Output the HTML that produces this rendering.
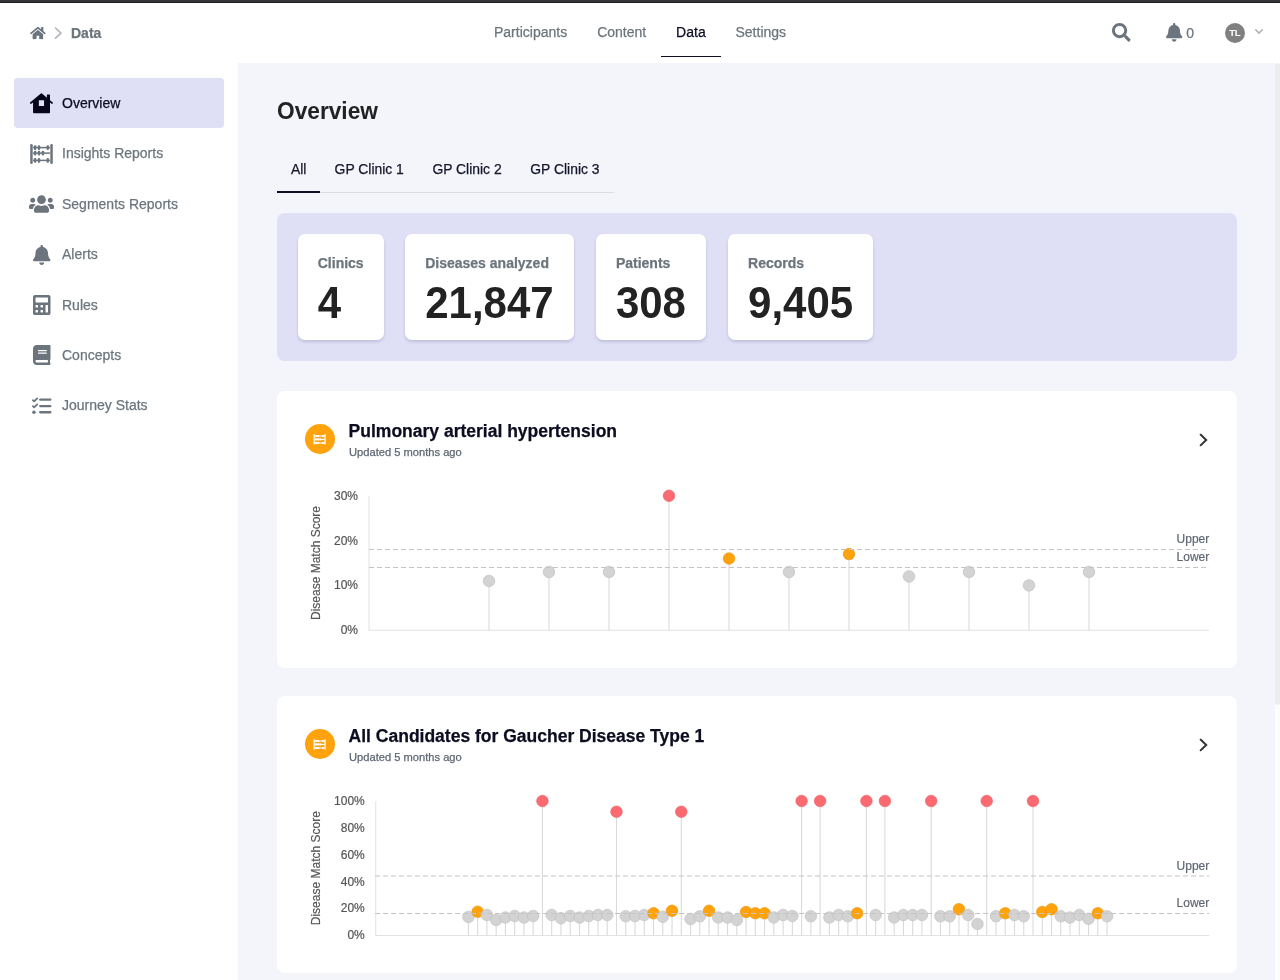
<!DOCTYPE html>
<html lang="en"><head><meta charset="utf-8"><title>Overview</title>
<style>
*{box-sizing:border-box}
html,body{margin:0;padding:0}
body{width:1280px;height:980px;overflow:hidden;position:relative;background:#f4f5fa;font-family:"Liberation Sans",sans-serif;font-size:14px;color:#6c757d;-webkit-text-stroke:0.250px}
#root{position:absolute;left:0;top:0;width:1280px;height:980px;will-change:transform}
.abs{position:absolute}
.ic{position:absolute;display:block;overflow:visible}
.t{position:absolute;white-space:nowrap;line-height:16px;height:16px}
#topbar{left:0;top:0;width:1280px;height:3px;background:linear-gradient(#34353a 0,#34353a 2px,#1c1c1e 2px,#1c1c1e 3px)}
#header{left:0;top:3px;width:1280px;height:60px;background:#fff}
#sidebar{left:0;top:63px;width:238px;height:917px;background:#fff}
.nav{color:#6c757d;font-size:14px}
.side{font-size:14px;color:#6c757d}
.dark{color:#0c0d21}
#active{left:14px;top:78px;width:210px;height:50px;border-radius:4px;background:#dfdff6}
h1{position:absolute;margin:0;-webkit-text-stroke:0;left:277px;top:95.600px;transform:translateY(0.6px) scaleY(1.055);transform-origin:0 21.500px;font-size:22.7px;line-height:28px;font-weight:bold;color:#222}
.tab{color:#15162b;font-size:13.900px}
#panel{left:277px;top:212.800px;width:960px;height:148.100px;border-radius:8px;background:#dfdff6}
.stat{position:absolute;top:234px;height:106px;background:#fff;border-radius:7px;box-shadow:0 2px 3px rgba(40,40,90,.17)}
.stat .l{position:absolute;left:20px;top:21px;font-size:14px;line-height:16px;font-weight:bold;color:#6c757d;white-space:nowrap}
.stat .n{position:absolute;left:20px;top:46.100px;-webkit-text-stroke:0;transform:scale(1,1.058);transform-origin:0 38.560px;font-size:42px;line-height:48px;font-weight:bold;color:#222;white-space:nowrap}
.card{position:absolute;left:277px;width:960px;height:277.500px;background:#fff;border-radius:8px}
.ttl{position:absolute;left:348.600px;font-size:17.5px;line-height:20px;font-weight:bold;color:#0c0d21;white-space:nowrap}
.sub{position:absolute;left:349px;font-size:11.150px;line-height:13px;color:#5f6773;white-space:nowrap}
.dot{position:absolute;left:305px;width:30px;height:30px;border-radius:50%;background:#ffa20c}
svg text{font-family:"Liberation Sans",sans-serif}
.tk{font-size:12px;fill:#555;stroke:#555;stroke-width:.2px}
.ul{font-size:12px;fill:#5f6773;stroke:#5f6773;stroke-width:.2px}
.du{stroke:#c4c4c4;stroke-width:1;stroke-dasharray:5 3}
.dl{stroke:#c4c4c4;stroke-width:1;stroke-dasharray:5 3}
</style></head><body>
<div id="root">
<div id="topbar" class="abs"></div>
<div id="header" class="abs"></div>
<div id="sidebar" class="abs"></div>

<header>
<svg class="ic" style="left:30px;top:25.6px;width:15.75px;height:14px" viewBox="0 0 576 512"><path fill="#6c757d" d="M280.370 148.260L96 300.110V464a16 16 0 0 0 16 16l112.060-.29a16 16 0 0 0 15.920-16V368a16 16 0 0 1 16-16h64a16 16 0 0 1 16 16v95.640a16 16 0 0 0 16 16.050L464 480a16 16 0 0 0 16-16V300L295.670 148.260a12.190 12.190 0 0 0-15.300 0zM571.600 251.470L488 182.560V44.050a12 12 0 0 0-12-12h-56a12 12 0 0 0-12 12v72.610L318.470 43a48 48 0 0 0-61 0L4.340 251.470a12 12 0 0 0-1.600 16.900l25.500 31A12 12 0 0 0 45.150 301l235.220-193.740a12.190 12.190 0 0 1 15.300 0L530.900 301a12 12 0 0 0 16.900-1.600l25.500-31a12 12 0 0 0-1.700-16.930z"/></svg>
<svg class="ic" style="left:54px;top:26px;width:10px;height:14px" viewBox="0 0 10 14"><path d="M1.500 2L7 7.100L1.500 12.200" fill="none" stroke="#b0b3b9" stroke-width="1.600" stroke-linecap="round" stroke-linejoin="round"/></svg>
<div class="t" style="left:71px;top:25px;font-weight:bold;color:#6c757d">Data</div>
<div class="t nav" style="left:494px;top:24px">Participants</div>
<div class="t nav" style="left:597.2px;top:24px">Content</div>
<div class="t nav dark" style="left:676.1px;top:24px">Data</div>
<div class="t nav" style="left:735.5px;top:24px">Settings</div>
<div class="abs" style="left:661px;top:55.700px;width:60px;height:1.600px;background:#0c0d21"></div>
<svg class="ic" style="left:1111.8px;top:23.2px;width:18.67px;height:18.67px" viewBox="0 0 512 512"><path fill="#6c757d" d="M505 442.700L405.300 343c-4.500-4.500-10.600-7-17-7H372c27.600-35.300 44-79.700 44-128C416 93.100 322.900 0 208 0S0 93.100 0 208s93.100 208 208 208c48.300 0 92.700-16.400 128-44v16.300c0 6.400 2.500 12.500 7 17l99.700 99.700c9.400 9.400 24.600 9.400 33.900 0l28.300-28.300c9.400-9.400 9.400-24.600.1-34zM208 336c-70.700 0-128-57.200-128-128 0-70.700 57.200-128 128-128 70.700 0 128 57.200 128 128 0 70.700-57.200 128-128 128z"/></svg>
<svg class="ic" style="left:1165.8px;top:23.2px;width:16.34px;height:18.67px" viewBox="0 0 448 512"><path fill="#6c757d" d="M224 512c35.320 0 63.970-28.650 63.970-64H160.030c0 35.350 28.650 64 63.970 64zm215.390-149.710c-19.320-20.760-55.470-51.990-55.470-154.290 0-77.700-54.480-139.900-127.940-155.160V32c0-17.670-14.320-32-31.980-32s-31.980 14.330-31.980 32v20.840C118.560 68.100 64.080 130.300 64.080 208c0 102.300-36.150 133.530-55.470 154.290-6 6.450-8.660 14.160-8.610 21.710.11 16.400 12.980 32 32.100 32h383.800c19.120 0 32-15.600 32.100-32 .05-7.550-2.610-15.270-8.610-21.710z"/></svg>
<div class="t" style="left:1186.300px;top:25px;color:#6c757d">0</div>
<div class="abs" style="left:1225px;top:23px;width:20px;height:20px;border-radius:50%;background:#808080;color:#fff;font-size:9.600px;font-weight:bold;line-height:19px;text-align:center;letter-spacing:-0.500px;padding-right:0.600px;-webkit-text-stroke:0">TL</div>
<svg class="ic" style="left:1254px;top:28px;width:10px;height:8px" viewBox="0 0 10 8"><path d="M1.700 1.800L5 5.100L8.300 1.800" fill="none" stroke="#b2b4ba" stroke-width="1.600" stroke-linecap="round" stroke-linejoin="round"/></svg>
</header>
<aside><nav>
<div id="active" class="abs"></div>
<div class="t side dark" style="left:62px;top:94.5px">Overview</div>
<div class="t side" style="left:62px;top:145.0px">Insights Reports</div>
<div class="t side" style="left:62px;top:195.5px">Segments Reports</div>
<div class="t side" style="left:62px;top:246.0px">Alerts</div>
<div class="t side" style="left:62px;top:296.5px">Rules</div>
<div class="t side" style="left:62px;top:346.5px">Concepts</div>
<div class="t side" style="left:62px;top:397.0px">Journey Stats</div>
<svg class="ic" style="left:30px;top:92.7px;width:23px;height:20.5px" viewBox="0 0 23 20.5"><path fill="#060618" fill-rule="evenodd" d="M10.900 0.450 Q11.430 -0.050 11.960 0.450 L16.900 4.650 V1.950 a0.550 0.550 0 0 1 .55-.55 h2.000 a0.550 0.550 0 0 1 .55.55 V7.350 L22.800 9.550 Q23.150 9.900 22.800 10.250 L22.200 10.900 Q21.900 11.150 21.550 10.850 L20.000 9.500 V19.400 a0.800 0.800 0 0 1-.8.8 H3.860 a0.800 0.800 0 0 1-.8-.8 V9.500 L1.310 10.850 Q0.960 11.150 0.660 10.900 L0.060 10.250 Q-0.290 9.900 0.060 9.550 Z M8.860 7.350 v5.700 h5.200 v-5.700 Z"/></svg>
<svg class="ic" style="left:30px;top:144px;width:23px;height:20px" viewBox="0 0 23 20"><rect x="0.2" y="0" width="2.5" height="20" rx="1.25" fill="#6c757d"/><rect x="20.3" y="0" width="2.5" height="20" rx="1.25" fill="#6c757d"/><rect x="3" y="2.85" width="17" height="1.5" fill="#6c757d"/><rect x="3.90" y="1.20" width="2.4" height="4.8" rx="1" fill="#6c757d"/><rect x="7.80" y="1.20" width="2.4" height="4.8" rx="1" fill="#6c757d"/><rect x="16.55" y="1.20" width="2.4" height="4.8" rx="1" fill="#6c757d"/><rect x="3" y="8.35" width="17" height="1.5" fill="#6c757d"/><rect x="3.90" y="6.70" width="2.4" height="4.8" rx="1" fill="#6c757d"/><rect x="7.80" y="6.70" width="2.4" height="4.8" rx="1" fill="#6c757d"/><rect x="11.70" y="6.70" width="2.4" height="4.8" rx="1" fill="#6c757d"/><rect x="3" y="15.65" width="17" height="1.5" fill="#6c757d"/><rect x="3.90" y="14.00" width="2.4" height="4.8" rx="1" fill="#6c757d"/><rect x="7.80" y="14.00" width="2.4" height="4.8" rx="1" fill="#6c757d"/><rect x="16.55" y="14.00" width="2.4" height="4.8" rx="1" fill="#6c757d"/></svg>
<svg class="ic" style="left:29px;top:194px;width:25.00px;height:20px" viewBox="0 0 640 512"><path fill="#6c757d" d="M96 224c35.3 0 64-28.7 64-64s-28.7-64-64-64-64 28.7-64 64 28.7 64 64 64zm448 0c35.3 0 64-28.7 64-64s-28.7-64-64-64-64 28.7-64 64 28.7 64 64 64zm32 32h-64c-17.6 0-33.5 7.1-45.1 18.6 40.3 22.1 68.9 62 75.1 109.4h66c17.7 0 32-14.3 32-32v-32c0-35.3-28.7-64-64-64zm-256 0c61.9 0 112-50.1 112-112S381.9 32 320 32 208 82.1 208 144s50.1 112 112 112zm76.800 32h-8.300c-20.800 10-43.900 16-68.500 16s-47.600-6-68.500-16h-8.300C179.600 288 128 339.600 128 403.200V432c0 26.500 21.500 48 48 48h288c26.500 0 48-21.500 48-48v-28.800c0-63.600-51.600-115.200-115.200-115.200zm-223.700-13.400C161.500 263.100 145.600 256 128 256H64c-35.300 0-64 28.700-64 64v32c0 17.700 14.300 32 32 32h65.900c6.300-47.400 34.900-87.300 75.200-109.400z"/></svg>
<svg class="ic" style="left:32.75px;top:245px;width:17.50px;height:20px" viewBox="0 0 448 512"><path fill="#6c757d" d="M224 512c35.320 0 63.970-28.650 63.970-64H160.030c0 35.350 28.650 64 63.970 64zm215.390-149.710c-19.320-20.760-55.470-51.990-55.470-154.290 0-77.700-54.480-139.900-127.940-155.160V32c0-17.670-14.320-32-31.980-32s-31.980 14.330-31.980 32v20.840C118.560 68.100 64.080 130.300 64.080 208c0 102.300-36.150 133.530-55.470 154.290-6 6.450-8.660 14.160-8.610 21.710.11 16.400 12.980 32 32.100 32h383.800c19.120 0 32-15.600 32.100-32 .05-7.550-2.610-15.270-8.610-21.710z"/></svg>
<svg class="ic" style="left:32.75px;top:295px;width:17.50px;height:20px" viewBox="0 0 448 512"><path fill="#6c757d" d="M400 0H48C22.400 0 0 22.400 0 48v416c0 25.600 22.400 48 48 48h352c25.600 0 48-22.400 48-48V48c0-25.600-22.400-48-48-48zM128 435.200c0 6.400-6.400 12.800-12.800 12.800H76.800c-6.400 0-12.800-6.400-12.800-12.800v-38.400c0-6.400 6.400-12.800 12.800-12.800h38.400c6.400 0 12.800 6.400 12.800 12.800v38.400zm0-128c0 6.400-6.400 12.800-12.800 12.800H76.800c-6.400 0-12.800-6.400-12.800-12.800v-38.400c0-6.400 6.400-12.800 12.800-12.800h38.400c6.400 0 12.800 6.400 12.800 12.800v38.400zm128 128c0 6.400-6.400 12.800-12.800 12.800h-38.400c-6.400 0-12.800-6.400-12.800-12.800v-38.400c0-6.400 6.400-12.800 12.800-12.800h38.400c6.400 0 12.800 6.400 12.800 12.800v38.400zm0-128c0 6.400-6.400 12.800-12.800 12.800h-38.400c-6.400 0-12.800-6.400-12.800-12.800v-38.400c0-6.400 6.400-12.800 12.800-12.800h38.400c6.400 0 12.800 6.400 12.800 12.800v38.400zm128 128c0 6.400-6.400 12.800-12.800 12.800h-38.400c-6.400 0-12.800-6.400-12.800-12.800V268.800c0-6.400 6.400-12.800 12.800-12.800h38.400c6.400 0 12.800 6.400 12.800 12.800v166.400zm0-256c0 6.400-6.400 12.800-12.800 12.800H76.800c-6.400 0-12.800-6.400-12.800-12.800V76.800C64 70.400 70.400 64 76.800 64h294.400c6.400 0 12.800 6.400 12.800 12.800v102.400z"/></svg>
<svg class="ic" style="left:32.75px;top:345px;width:17.50px;height:20px" viewBox="0 0 448 512"><path fill="#6c757d" d="M448 360V24c0-13.300-10.700-24-24-24H96C43 0 0 43 0 96v320c0 53 43 96 96 96h328c13.300 0 24-10.700 24-24v-16c0-7.500-3.500-14.300-8.900-18.700-4.200-15.400-4.200-59.300 0-74.700 5.400-4.300 8.900-11.100 8.900-18.600zM128 134c0-3.300 2.700-6 6-6h212c3.300 0 6 2.700 6 6v20c0 3.300-2.700 6-6 6H134c-3.300 0-6-2.700-6-6v-20zm0 64c0-3.300 2.700-6 6-6h212c3.300 0 6 2.700 6 6v20c0 3.300-2.700 6-6 6H134c-3.300 0-6-2.700-6-6v-20zm253.400 250H96c-17.700 0-32-14.300-32-32 0-17.600 14.400-32 32-32h285.400c-1.900 17.100-1.900 46.900 0 64z"/></svg>
<svg class="ic" style="left:31.5px;top:395.5px;width:20px;height:20px" viewBox="0 0 20 20"><g stroke="#6c757d" fill="none" stroke-width="2.300" stroke-linecap="round"><path d="M8.200 3.650H18.350M8.200 10.050H18.350M8.200 16.250H18.350"/></g><g stroke="#6c757d" fill="none" stroke-width="1.800" stroke-linecap="round" stroke-linejoin="round"><path d="M0.900 4.100L2.150 5.400L5.200 2.400M0.900 10.100L2.150 11.400L5.200 8.400"/></g><circle cx="1.950" cy="16.250" r="1.750" fill="#6c757d"/></svg>
</nav></aside>
<main>
<h1>Overview</h1>
<div class="t tab" style="left:291px;top:161px">All</div>
<div class="t tab" style="left:334.6px;top:161px">GP Clinic 1</div>
<div class="t tab" style="left:432.4px;top:161px">GP Clinic 2</div>
<div class="t tab" style="left:530.3px;top:161px">GP Clinic 3</div>
<div class="abs" style="left:277px;top:192px;width:337px;height:1px;background:#dcdce0"></div>
<div class="abs" style="left:277px;top:190.500px;width:43px;height:2.500px;background:#0c0d21"></div>
<div id="panel" class="abs"></div>
<div class="stat" style="left:297.75px;width:85.8px"><div class="l">Clinics</div><div class="n">4</div></div>
<div class="stat" style="left:405.2px;width:168.8px"><div class="l">Diseases analyzed</div><div class="n">21,847</div></div>
<div class="stat" style="left:595.9px;width:110.4px"><div class="l">Patients</div><div class="n">308</div></div>
<div class="stat" style="left:728.1px;width:145px"><div class="l">Records</div><div class="n">9,405</div></div>
<div class="card" style="top:390.8px"></div>
<div class="dot" style="top:424px"></div>
<svg class="ic" style="left:313px;top:434.2px;width:13.2px;height:10.8px" viewBox="0 0 23 20"><rect x="0.2" y="0" width="2.5" height="20" rx="1.25" fill="#fff"/><rect x="20.3" y="0" width="2.5" height="20" rx="1.25" fill="#fff"/><rect x="3" y="2.70" width="17" height="2.0" fill="#fff"/><rect x="3.40" y="1.70" width="3.4" height="4.0" rx="1" fill="#fff"/><rect x="7.30" y="1.70" width="3.4" height="4.0" rx="1" fill="#fff"/><rect x="16.05" y="1.70" width="3.4" height="4.0" rx="1" fill="#fff"/><rect x="3" y="9.00" width="17" height="2.0" fill="#fff"/><rect x="3.40" y="8.00" width="3.4" height="4.0" rx="1" fill="#fff"/><rect x="7.30" y="8.00" width="3.4" height="4.0" rx="1" fill="#fff"/><rect x="11.20" y="8.00" width="3.4" height="4.0" rx="1" fill="#fff"/><rect x="3" y="15.60" width="17" height="2.0" fill="#fff"/><rect x="3.40" y="14.60" width="3.4" height="4.0" rx="1" fill="#fff"/><rect x="7.30" y="14.60" width="3.4" height="4.0" rx="1" fill="#fff"/><rect x="16.05" y="14.60" width="3.4" height="4.0" rx="1" fill="#fff"/></svg>
<div class="ttl" style="top:420.5px">Pulmonary arterial hypertension</div>
<div class="sub" style="top:445.5px">Updated 5 months ago</div>
<svg class="ic" style="left:1197px;top:432px;width:14px;height:16px" viewBox="0 0 14 16"><path d="M3.800 2.800L9.200 8L3.800 13.200" fill="none" stroke="#333" stroke-width="2" stroke-linecap="square" stroke-linejoin="miter"/></svg>
<div class="card" style="top:695.8px"></div>
<div class="dot" style="top:729px"></div>
<svg class="ic" style="left:313px;top:739.2px;width:13.2px;height:10.8px" viewBox="0 0 23 20"><rect x="0.2" y="0" width="2.5" height="20" rx="1.25" fill="#fff"/><rect x="20.3" y="0" width="2.5" height="20" rx="1.25" fill="#fff"/><rect x="3" y="2.70" width="17" height="2.0" fill="#fff"/><rect x="3.40" y="1.70" width="3.4" height="4.0" rx="1" fill="#fff"/><rect x="7.30" y="1.70" width="3.4" height="4.0" rx="1" fill="#fff"/><rect x="16.05" y="1.70" width="3.4" height="4.0" rx="1" fill="#fff"/><rect x="3" y="9.00" width="17" height="2.0" fill="#fff"/><rect x="3.40" y="8.00" width="3.4" height="4.0" rx="1" fill="#fff"/><rect x="7.30" y="8.00" width="3.4" height="4.0" rx="1" fill="#fff"/><rect x="11.20" y="8.00" width="3.4" height="4.0" rx="1" fill="#fff"/><rect x="3" y="15.60" width="17" height="2.0" fill="#fff"/><rect x="3.40" y="14.60" width="3.4" height="4.0" rx="1" fill="#fff"/><rect x="7.30" y="14.60" width="3.4" height="4.0" rx="1" fill="#fff"/><rect x="16.05" y="14.60" width="3.4" height="4.0" rx="1" fill="#fff"/></svg>
<div class="ttl" style="top:725.5px">All Candidates for Gaucher Disease Type 1</div>
<div class="sub" style="top:750.5px">Updated 5 months ago</div>
<svg class="ic" style="left:1197px;top:737px;width:14px;height:16px" viewBox="0 0 14 16"><path d="M3.800 2.800L9.200 8L3.800 13.200" fill="none" stroke="#333" stroke-width="2" stroke-linecap="square" stroke-linejoin="miter"/></svg>
<svg class="ic" style="left:0;top:0;width:1280px;height:980px" viewBox="0 0 1280 980"><text x="358" y="500.05" text-anchor="end" class="tk">30%</text><text x="358" y="544.50" text-anchor="end" class="tk">20%</text><text x="358" y="589.10" text-anchor="end" class="tk">10%</text><text x="358" y="633.70" text-anchor="end" class="tk">0%</text><text transform="translate(320,563.0) rotate(-90)" text-anchor="middle" class="tk">Disease Match Score</text><path d="M369 495.75V630.25H1209.25" fill="none" stroke="#e2e2e2" stroke-width="1"/><line x1="489.00" y1="580.93" x2="489.00" y2="630.25" stroke="#dadada" stroke-width="1.100"/><line x1="549.00" y1="571.97" x2="549.00" y2="630.25" stroke="#dadada" stroke-width="1.100"/><line x1="609.00" y1="571.97" x2="609.00" y2="630.25" stroke="#dadada" stroke-width="1.100"/><line x1="669.00" y1="495.75" x2="669.00" y2="630.25" stroke="#dadada" stroke-width="1.100"/><line x1="729.00" y1="558.52" x2="729.00" y2="630.25" stroke="#dadada" stroke-width="1.100"/><line x1="789.00" y1="571.97" x2="789.00" y2="630.25" stroke="#dadada" stroke-width="1.100"/><line x1="849.00" y1="554.03" x2="849.00" y2="630.25" stroke="#dadada" stroke-width="1.100"/><line x1="909.00" y1="576.45" x2="909.00" y2="630.25" stroke="#dadada" stroke-width="1.100"/><line x1="969.00" y1="571.97" x2="969.00" y2="630.25" stroke="#dadada" stroke-width="1.100"/><line x1="1029.00" y1="585.42" x2="1029.00" y2="630.25" stroke="#dadada" stroke-width="1.100"/><line x1="1089.00" y1="571.97" x2="1089.00" y2="630.25" stroke="#dadada" stroke-width="1.100"/><circle cx="489.00" cy="580.93" r="5.800" fill="#d3d3d3" stroke="#bcbcbc" stroke-width="0.600"/><circle cx="549.00" cy="571.97" r="5.800" fill="#d3d3d3" stroke="#bcbcbc" stroke-width="0.600"/><circle cx="609.00" cy="571.97" r="5.800" fill="#d3d3d3" stroke="#bcbcbc" stroke-width="0.600"/><circle cx="669.00" cy="495.75" r="5.800" fill="#fb6a70" stroke="#ea5a61" stroke-width="0.600"/><circle cx="729.00" cy="558.52" r="5.800" fill="#ffa20c" stroke="#e39208" stroke-width="0.600"/><circle cx="789.00" cy="571.97" r="5.800" fill="#d3d3d3" stroke="#bcbcbc" stroke-width="0.600"/><circle cx="849.00" cy="554.03" r="5.800" fill="#ffa20c" stroke="#e39208" stroke-width="0.600"/><circle cx="909.00" cy="576.45" r="5.800" fill="#d3d3d3" stroke="#bcbcbc" stroke-width="0.600"/><circle cx="969.00" cy="571.97" r="5.800" fill="#d3d3d3" stroke="#bcbcbc" stroke-width="0.600"/><circle cx="1029.00" cy="585.42" r="5.800" fill="#d3d3d3" stroke="#bcbcbc" stroke-width="0.600"/><circle cx="1089.00" cy="571.97" r="5.800" fill="#d3d3d3" stroke="#bcbcbc" stroke-width="0.600"/><line x1="369" y1="549.5" x2="1209.25" y2="549.5" class="du"/><line x1="369" y1="567.5" x2="1209.25" y2="567.5" class="dl"/><text x="1209.25" y="542.5" text-anchor="end" class="ul">Upper</text><text x="1209.25" y="560.5" text-anchor="end" class="ul">Lower</text><text x="364.75" y="805.20" text-anchor="end" class="tk">100%</text><text x="364.75" y="832.00" text-anchor="end" class="tk">80%</text><text x="364.75" y="858.80" text-anchor="end" class="tk">60%</text><text x="364.75" y="885.60" text-anchor="end" class="tk">40%</text><text x="364.75" y="912.40" text-anchor="end" class="tk">20%</text><text x="364.75" y="939.20" text-anchor="end" class="tk">0%</text><text transform="translate(320,868.2) rotate(-90)" text-anchor="middle" class="tk">Disease Match Score</text><path d="M375.75 801V935.5H1209.25" fill="none" stroke="#e2e2e2" stroke-width="1"/><line x1="468.41" y1="917.00" x2="468.41" y2="935.5" stroke="#dadada" stroke-width="1.100"/><line x1="477.66" y1="911.75" x2="477.66" y2="935.5" stroke="#dadada" stroke-width="1.100"/><line x1="486.92" y1="915.00" x2="486.92" y2="935.5" stroke="#dadada" stroke-width="1.100"/><line x1="496.17" y1="920.00" x2="496.17" y2="935.5" stroke="#dadada" stroke-width="1.100"/><line x1="505.43" y1="917.50" x2="505.43" y2="935.5" stroke="#dadada" stroke-width="1.100"/><line x1="514.68" y1="916.00" x2="514.68" y2="935.5" stroke="#dadada" stroke-width="1.100"/><line x1="523.94" y1="917.50" x2="523.94" y2="935.5" stroke="#dadada" stroke-width="1.100"/><line x1="533.20" y1="916.00" x2="533.20" y2="935.5" stroke="#dadada" stroke-width="1.100"/><line x1="542.45" y1="801.00" x2="542.45" y2="935.5" stroke="#dadada" stroke-width="1.100"/><line x1="551.71" y1="915.00" x2="551.71" y2="935.5" stroke="#dadada" stroke-width="1.100"/><line x1="560.96" y1="918.25" x2="560.96" y2="935.5" stroke="#dadada" stroke-width="1.100"/><line x1="570.22" y1="916.00" x2="570.22" y2="935.5" stroke="#dadada" stroke-width="1.100"/><line x1="579.47" y1="917.50" x2="579.47" y2="935.5" stroke="#dadada" stroke-width="1.100"/><line x1="588.73" y1="916.00" x2="588.73" y2="935.5" stroke="#dadada" stroke-width="1.100"/><line x1="597.98" y1="915.00" x2="597.98" y2="935.5" stroke="#dadada" stroke-width="1.100"/><line x1="607.24" y1="915.00" x2="607.24" y2="935.5" stroke="#dadada" stroke-width="1.100"/><line x1="616.50" y1="811.75" x2="616.50" y2="935.5" stroke="#dadada" stroke-width="1.100"/><line x1="625.75" y1="916.25" x2="625.75" y2="935.5" stroke="#dadada" stroke-width="1.100"/><line x1="635.01" y1="916.00" x2="635.01" y2="935.5" stroke="#dadada" stroke-width="1.100"/><line x1="644.26" y1="915.00" x2="644.26" y2="935.5" stroke="#dadada" stroke-width="1.100"/><line x1="653.52" y1="913.25" x2="653.52" y2="935.5" stroke="#dadada" stroke-width="1.100"/><line x1="662.77" y1="916.75" x2="662.77" y2="935.5" stroke="#dadada" stroke-width="1.100"/><line x1="672.03" y1="910.75" x2="672.03" y2="935.5" stroke="#dadada" stroke-width="1.100"/><line x1="681.28" y1="811.75" x2="681.28" y2="935.5" stroke="#dadada" stroke-width="1.100"/><line x1="690.54" y1="919.00" x2="690.54" y2="935.5" stroke="#dadada" stroke-width="1.100"/><line x1="699.80" y1="916.25" x2="699.80" y2="935.5" stroke="#dadada" stroke-width="1.100"/><line x1="709.05" y1="910.75" x2="709.05" y2="935.5" stroke="#dadada" stroke-width="1.100"/><line x1="718.31" y1="917.50" x2="718.31" y2="935.5" stroke="#dadada" stroke-width="1.100"/><line x1="727.56" y1="917.50" x2="727.56" y2="935.5" stroke="#dadada" stroke-width="1.100"/><line x1="736.82" y1="920.00" x2="736.82" y2="935.5" stroke="#dadada" stroke-width="1.100"/><line x1="746.07" y1="912.00" x2="746.07" y2="935.5" stroke="#dadada" stroke-width="1.100"/><line x1="755.33" y1="913.25" x2="755.33" y2="935.5" stroke="#dadada" stroke-width="1.100"/><line x1="764.59" y1="913.25" x2="764.59" y2="935.5" stroke="#dadada" stroke-width="1.100"/><line x1="773.84" y1="917.50" x2="773.84" y2="935.5" stroke="#dadada" stroke-width="1.100"/><line x1="783.10" y1="915.00" x2="783.10" y2="935.5" stroke="#dadada" stroke-width="1.100"/><line x1="792.35" y1="916.00" x2="792.35" y2="935.5" stroke="#dadada" stroke-width="1.100"/><line x1="801.61" y1="801.00" x2="801.61" y2="935.5" stroke="#dadada" stroke-width="1.100"/><line x1="810.86" y1="916.25" x2="810.86" y2="935.5" stroke="#dadada" stroke-width="1.100"/><line x1="820.12" y1="801.00" x2="820.12" y2="935.5" stroke="#dadada" stroke-width="1.100"/><line x1="829.37" y1="917.50" x2="829.37" y2="935.5" stroke="#dadada" stroke-width="1.100"/><line x1="838.63" y1="915.00" x2="838.63" y2="935.5" stroke="#dadada" stroke-width="1.100"/><line x1="847.89" y1="916.25" x2="847.89" y2="935.5" stroke="#dadada" stroke-width="1.100"/><line x1="857.14" y1="913.25" x2="857.14" y2="935.5" stroke="#dadada" stroke-width="1.100"/><line x1="866.40" y1="801.00" x2="866.40" y2="935.5" stroke="#dadada" stroke-width="1.100"/><line x1="875.65" y1="915.00" x2="875.65" y2="935.5" stroke="#dadada" stroke-width="1.100"/><line x1="884.91" y1="801.00" x2="884.91" y2="935.5" stroke="#dadada" stroke-width="1.100"/><line x1="894.16" y1="917.50" x2="894.16" y2="935.5" stroke="#dadada" stroke-width="1.100"/><line x1="903.42" y1="915.00" x2="903.42" y2="935.5" stroke="#dadada" stroke-width="1.100"/><line x1="912.67" y1="915.00" x2="912.67" y2="935.5" stroke="#dadada" stroke-width="1.100"/><line x1="921.93" y1="915.00" x2="921.93" y2="935.5" stroke="#dadada" stroke-width="1.100"/><line x1="931.19" y1="801.00" x2="931.19" y2="935.5" stroke="#dadada" stroke-width="1.100"/><line x1="940.44" y1="916.25" x2="940.44" y2="935.5" stroke="#dadada" stroke-width="1.100"/><line x1="949.70" y1="916.25" x2="949.70" y2="935.5" stroke="#dadada" stroke-width="1.100"/><line x1="958.95" y1="909.25" x2="958.95" y2="935.5" stroke="#dadada" stroke-width="1.100"/><line x1="968.21" y1="915.00" x2="968.21" y2="935.5" stroke="#dadada" stroke-width="1.100"/><line x1="977.46" y1="924.00" x2="977.46" y2="935.5" stroke="#dadada" stroke-width="1.100"/><line x1="986.72" y1="801.00" x2="986.72" y2="935.5" stroke="#dadada" stroke-width="1.100"/><line x1="995.98" y1="916.25" x2="995.98" y2="935.5" stroke="#dadada" stroke-width="1.100"/><line x1="1005.23" y1="913.25" x2="1005.23" y2="935.5" stroke="#dadada" stroke-width="1.100"/><line x1="1014.49" y1="915.00" x2="1014.49" y2="935.5" stroke="#dadada" stroke-width="1.100"/><line x1="1023.74" y1="916.25" x2="1023.74" y2="935.5" stroke="#dadada" stroke-width="1.100"/><line x1="1033.00" y1="801.00" x2="1033.00" y2="935.5" stroke="#dadada" stroke-width="1.100"/><line x1="1042.25" y1="912.00" x2="1042.25" y2="935.5" stroke="#dadada" stroke-width="1.100"/><line x1="1051.51" y1="909.25" x2="1051.51" y2="935.5" stroke="#dadada" stroke-width="1.100"/><line x1="1060.76" y1="916.25" x2="1060.76" y2="935.5" stroke="#dadada" stroke-width="1.100"/><line x1="1070.02" y1="917.50" x2="1070.02" y2="935.5" stroke="#dadada" stroke-width="1.100"/><line x1="1079.28" y1="915.00" x2="1079.28" y2="935.5" stroke="#dadada" stroke-width="1.100"/><line x1="1088.53" y1="918.75" x2="1088.53" y2="935.5" stroke="#dadada" stroke-width="1.100"/><line x1="1097.79" y1="913.25" x2="1097.79" y2="935.5" stroke="#dadada" stroke-width="1.100"/><line x1="1107.04" y1="916.25" x2="1107.04" y2="935.5" stroke="#dadada" stroke-width="1.100"/><circle cx="468.41" cy="917.00" r="5.800" fill="#d3d3d3" stroke="#bcbcbc" stroke-width="0.600"/><circle cx="477.66" cy="911.75" r="5.800" fill="#ffa20c" stroke="#e39208" stroke-width="0.600"/><circle cx="486.92" cy="915.00" r="5.800" fill="#d3d3d3" stroke="#bcbcbc" stroke-width="0.600"/><circle cx="496.17" cy="920.00" r="5.800" fill="#d3d3d3" stroke="#bcbcbc" stroke-width="0.600"/><circle cx="505.43" cy="917.50" r="5.800" fill="#d3d3d3" stroke="#bcbcbc" stroke-width="0.600"/><circle cx="514.68" cy="916.00" r="5.800" fill="#d3d3d3" stroke="#bcbcbc" stroke-width="0.600"/><circle cx="523.94" cy="917.50" r="5.800" fill="#d3d3d3" stroke="#bcbcbc" stroke-width="0.600"/><circle cx="533.20" cy="916.00" r="5.800" fill="#d3d3d3" stroke="#bcbcbc" stroke-width="0.600"/><circle cx="542.45" cy="801.00" r="5.800" fill="#fb6a70" stroke="#ea5a61" stroke-width="0.600"/><circle cx="551.71" cy="915.00" r="5.800" fill="#d3d3d3" stroke="#bcbcbc" stroke-width="0.600"/><circle cx="560.96" cy="918.25" r="5.800" fill="#d3d3d3" stroke="#bcbcbc" stroke-width="0.600"/><circle cx="570.22" cy="916.00" r="5.800" fill="#d3d3d3" stroke="#bcbcbc" stroke-width="0.600"/><circle cx="579.47" cy="917.50" r="5.800" fill="#d3d3d3" stroke="#bcbcbc" stroke-width="0.600"/><circle cx="588.73" cy="916.00" r="5.800" fill="#d3d3d3" stroke="#bcbcbc" stroke-width="0.600"/><circle cx="597.98" cy="915.00" r="5.800" fill="#d3d3d3" stroke="#bcbcbc" stroke-width="0.600"/><circle cx="607.24" cy="915.00" r="5.800" fill="#d3d3d3" stroke="#bcbcbc" stroke-width="0.600"/><circle cx="616.50" cy="811.75" r="5.800" fill="#fb6a70" stroke="#ea5a61" stroke-width="0.600"/><circle cx="625.75" cy="916.25" r="5.800" fill="#d3d3d3" stroke="#bcbcbc" stroke-width="0.600"/><circle cx="635.01" cy="916.00" r="5.800" fill="#d3d3d3" stroke="#bcbcbc" stroke-width="0.600"/><circle cx="644.26" cy="915.00" r="5.800" fill="#d3d3d3" stroke="#bcbcbc" stroke-width="0.600"/><circle cx="653.52" cy="913.25" r="5.800" fill="#ffa20c" stroke="#e39208" stroke-width="0.600"/><circle cx="662.77" cy="916.75" r="5.800" fill="#d3d3d3" stroke="#bcbcbc" stroke-width="0.600"/><circle cx="672.03" cy="910.75" r="5.800" fill="#ffa20c" stroke="#e39208" stroke-width="0.600"/><circle cx="681.28" cy="811.75" r="5.800" fill="#fb6a70" stroke="#ea5a61" stroke-width="0.600"/><circle cx="690.54" cy="919.00" r="5.800" fill="#d3d3d3" stroke="#bcbcbc" stroke-width="0.600"/><circle cx="699.80" cy="916.25" r="5.800" fill="#d3d3d3" stroke="#bcbcbc" stroke-width="0.600"/><circle cx="709.05" cy="910.75" r="5.800" fill="#ffa20c" stroke="#e39208" stroke-width="0.600"/><circle cx="718.31" cy="917.50" r="5.800" fill="#d3d3d3" stroke="#bcbcbc" stroke-width="0.600"/><circle cx="727.56" cy="917.50" r="5.800" fill="#d3d3d3" stroke="#bcbcbc" stroke-width="0.600"/><circle cx="736.82" cy="920.00" r="5.800" fill="#d3d3d3" stroke="#bcbcbc" stroke-width="0.600"/><circle cx="746.07" cy="912.00" r="5.800" fill="#ffa20c" stroke="#e39208" stroke-width="0.600"/><circle cx="755.33" cy="913.25" r="5.800" fill="#ffa20c" stroke="#e39208" stroke-width="0.600"/><circle cx="764.59" cy="913.25" r="5.800" fill="#ffa20c" stroke="#e39208" stroke-width="0.600"/><circle cx="773.84" cy="917.50" r="5.800" fill="#d3d3d3" stroke="#bcbcbc" stroke-width="0.600"/><circle cx="783.10" cy="915.00" r="5.800" fill="#d3d3d3" stroke="#bcbcbc" stroke-width="0.600"/><circle cx="792.35" cy="916.00" r="5.800" fill="#d3d3d3" stroke="#bcbcbc" stroke-width="0.600"/><circle cx="801.61" cy="801.00" r="5.800" fill="#fb6a70" stroke="#ea5a61" stroke-width="0.600"/><circle cx="810.86" cy="916.25" r="5.800" fill="#d3d3d3" stroke="#bcbcbc" stroke-width="0.600"/><circle cx="820.12" cy="801.00" r="5.800" fill="#fb6a70" stroke="#ea5a61" stroke-width="0.600"/><circle cx="829.37" cy="917.50" r="5.800" fill="#d3d3d3" stroke="#bcbcbc" stroke-width="0.600"/><circle cx="838.63" cy="915.00" r="5.800" fill="#d3d3d3" stroke="#bcbcbc" stroke-width="0.600"/><circle cx="847.89" cy="916.25" r="5.800" fill="#d3d3d3" stroke="#bcbcbc" stroke-width="0.600"/><circle cx="857.14" cy="913.25" r="5.800" fill="#ffa20c" stroke="#e39208" stroke-width="0.600"/><circle cx="866.40" cy="801.00" r="5.800" fill="#fb6a70" stroke="#ea5a61" stroke-width="0.600"/><circle cx="875.65" cy="915.00" r="5.800" fill="#d3d3d3" stroke="#bcbcbc" stroke-width="0.600"/><circle cx="884.91" cy="801.00" r="5.800" fill="#fb6a70" stroke="#ea5a61" stroke-width="0.600"/><circle cx="894.16" cy="917.50" r="5.800" fill="#d3d3d3" stroke="#bcbcbc" stroke-width="0.600"/><circle cx="903.42" cy="915.00" r="5.800" fill="#d3d3d3" stroke="#bcbcbc" stroke-width="0.600"/><circle cx="912.67" cy="915.00" r="5.800" fill="#d3d3d3" stroke="#bcbcbc" stroke-width="0.600"/><circle cx="921.93" cy="915.00" r="5.800" fill="#d3d3d3" stroke="#bcbcbc" stroke-width="0.600"/><circle cx="931.19" cy="801.00" r="5.800" fill="#fb6a70" stroke="#ea5a61" stroke-width="0.600"/><circle cx="940.44" cy="916.25" r="5.800" fill="#d3d3d3" stroke="#bcbcbc" stroke-width="0.600"/><circle cx="949.70" cy="916.25" r="5.800" fill="#d3d3d3" stroke="#bcbcbc" stroke-width="0.600"/><circle cx="958.95" cy="909.25" r="5.800" fill="#ffa20c" stroke="#e39208" stroke-width="0.600"/><circle cx="968.21" cy="915.00" r="5.800" fill="#d3d3d3" stroke="#bcbcbc" stroke-width="0.600"/><circle cx="977.46" cy="924.00" r="5.800" fill="#d3d3d3" stroke="#bcbcbc" stroke-width="0.600"/><circle cx="986.72" cy="801.00" r="5.800" fill="#fb6a70" stroke="#ea5a61" stroke-width="0.600"/><circle cx="995.98" cy="916.25" r="5.800" fill="#d3d3d3" stroke="#bcbcbc" stroke-width="0.600"/><circle cx="1005.23" cy="913.25" r="5.800" fill="#ffa20c" stroke="#e39208" stroke-width="0.600"/><circle cx="1014.49" cy="915.00" r="5.800" fill="#d3d3d3" stroke="#bcbcbc" stroke-width="0.600"/><circle cx="1023.74" cy="916.25" r="5.800" fill="#d3d3d3" stroke="#bcbcbc" stroke-width="0.600"/><circle cx="1033.00" cy="801.00" r="5.800" fill="#fb6a70" stroke="#ea5a61" stroke-width="0.600"/><circle cx="1042.25" cy="912.00" r="5.800" fill="#ffa20c" stroke="#e39208" stroke-width="0.600"/><circle cx="1051.51" cy="909.25" r="5.800" fill="#ffa20c" stroke="#e39208" stroke-width="0.600"/><circle cx="1060.76" cy="916.25" r="5.800" fill="#d3d3d3" stroke="#bcbcbc" stroke-width="0.600"/><circle cx="1070.02" cy="917.50" r="5.800" fill="#d3d3d3" stroke="#bcbcbc" stroke-width="0.600"/><circle cx="1079.28" cy="915.00" r="5.800" fill="#d3d3d3" stroke="#bcbcbc" stroke-width="0.600"/><circle cx="1088.53" cy="918.75" r="5.800" fill="#d3d3d3" stroke="#bcbcbc" stroke-width="0.600"/><circle cx="1097.79" cy="913.25" r="5.800" fill="#ffa20c" stroke="#e39208" stroke-width="0.600"/><circle cx="1107.04" cy="916.25" r="5.800" fill="#d3d3d3" stroke="#bcbcbc" stroke-width="0.600"/><line x1="375.1" y1="876" x2="1209.25" y2="876" class="du"/><line x1="375.1" y1="913.5" x2="1209.25" y2="913.5" class="dl"/><text x="1209.25" y="870" text-anchor="end" class="ul">Upper</text><text x="1209.25" y="907" text-anchor="end" class="ul">Lower</text></svg>
</main>
<div class="abs" style="left:1275px;top:63px;width:5px;height:917px;background:#fdfdfe"></div>
<div class="abs" style="left:1275px;top:63px;width:4.500px;height:642px;border-radius:3px;background:#ededed"></div>
</div></body></html>
